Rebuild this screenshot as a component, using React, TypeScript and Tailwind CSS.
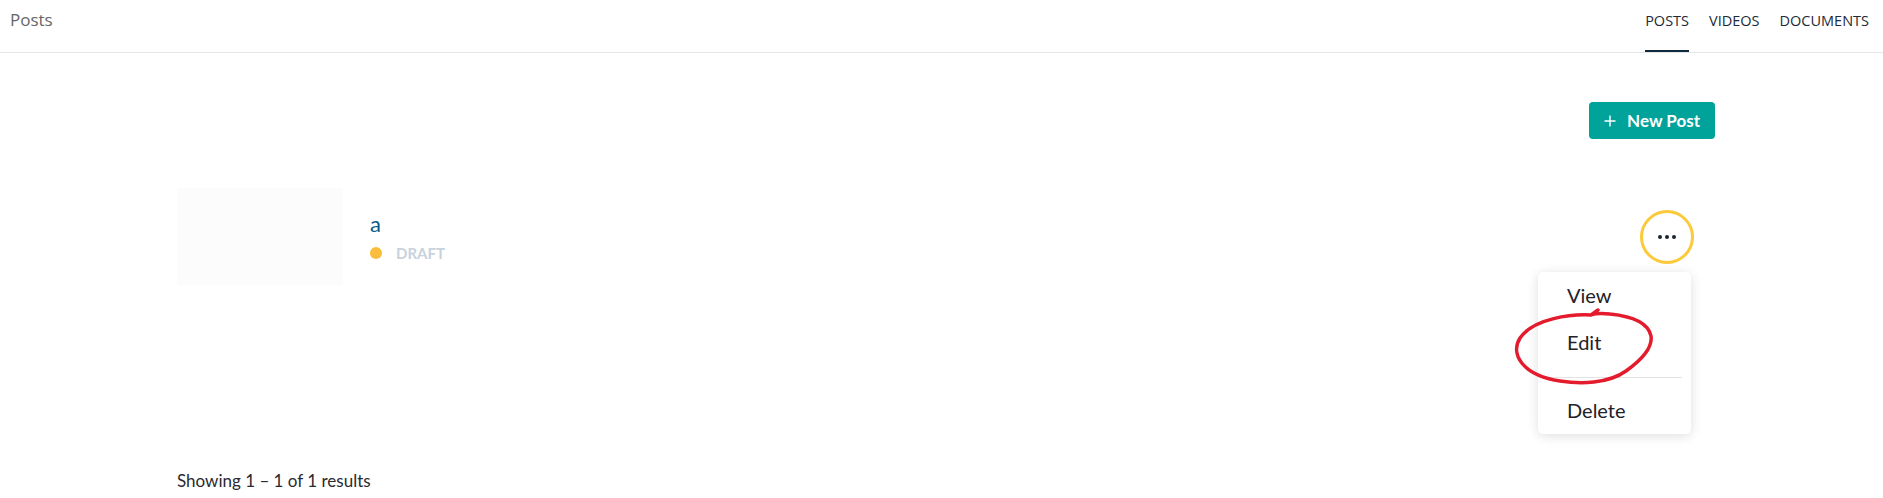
import React from "react";

const tabs = ["POSTS", "VIDEOS", "DOCUMENTS"];

const PostMenu: React.FC = () => (
  <div className="absolute top-[62px] right-[3px] z-10 w-[153px] rounded-[5px] bg-white shadow-[0_2px_12px_rgba(0,0,0,0.13)]">
    <div className="flex h-[47px] items-center pl-[29px] text-[20px] text-[#232128]">View</div>
    <div className="flex h-[47px] items-center pl-[29px] text-[20px] text-[#232128]">Edit</div>
    <div className="mx-[9px] mt-[11px] mb-[9px] h-px bg-[#e3e3e3]" />
    <div className="flex h-[47px] items-center pl-[29px] text-[20px] text-[#232128]">Delete</div>
    {/* hand-drawn annotation around Edit */}
    <svg
      className="pointer-events-none absolute top-[29px] left-[-28px] overflow-visible"
      width="150"
      height="90"
      viewBox="0 0 150 90"
      fill="none"
    >
      <path
        d="M88 9 L81 14 C62 13 24 17 10 37 C0 53 12 74 50 80 C70 83 98 83 116 70 C130 60 143 48 141 35 C138 21 120 15 100 13 C92 12 86 12 81 14"
        stroke="#e31b2c"
        strokeWidth="3.5"
        strokeLinecap="round"
        strokeLinejoin="round"
      />
    </svg>
  </div>
);

export default function App() {
  return (
    <div className="h-[498px] w-full bg-white font-['Lato',sans-serif]">
      <header className="flex h-[53px] items-stretch justify-between border-b border-[#e6e6e6]">
        <div className="pl-[10px] pt-[8px] font-['Open_Sans',sans-serif] text-[17px] leading-[24px] text-[#666]">Posts</div>
        <nav className="flex pr-[4px] font-['Open_Sans',sans-serif] text-[14.5px] leading-[20px] text-[#1e2a36]">
          {tabs.map((t, i) => (
            <div key={t} className="flex h-full flex-col px-[10px]">
              <span className="pt-[11px]">{t}</span>
              <div className={i === 0 ? "mt-auto h-[2px] bg-[#0f2a3c]" : "mt-auto h-[2px]"} />
            </div>
          ))}
        </nav>
      </header>

      <main className="pl-[177px] pr-[168px]">
        <div className="flex justify-end pt-[49px]">
          <button className="flex h-[37px] items-center gap-[11px] rounded-[4px] bg-[#00a39a] px-[15px] text-white">
            <svg width="12" height="12" viewBox="0 0 12 12" fill="none">
              <path d="M6 0.5V11.5M0.5 6H11.5" stroke="white" strokeWidth="1.4" />
            </svg>
            <span className="text-[17px] font-bold">New Post</span>
          </button>
        </div>

        <div className="mt-[49px] flex h-[97px] items-center">
          <div className="h-[97px] w-[166px] bg-[#fcfcfc]" />
          <div className="ml-[27px] flex flex-col">
            <span className="text-[22px] leading-[26px] text-[#0b5d8b]">a</span>
            <div className="mt-[6px] flex items-center">
              <span className="h-[12px] w-[12px] rounded-full bg-[#fbbd3d]" />
              <span className="ml-[14px] text-[15px] leading-[20px] font-bold text-[#c8d2dd]">DRAFT</span>
            </div>
          </div>
          <div className="relative mr-[21px] ml-auto h-[54px] w-[54px]">
            <div className="flex h-full w-full items-center justify-center gap-[3px] rounded-full border-[3px] border-[#fcc93a]">
              <span className="h-[4px] w-[4px] rounded-full bg-[#1b2430]" />
              <span className="h-[4px] w-[4px] rounded-full bg-[#1b2430]" />
              <span className="h-[4px] w-[4px] rounded-full bg-[#1b2430]" />
            </div>
            <PostMenu />
          </div>
        </div>

        <p className="mt-[184px] text-[17px] leading-[24px] text-[#2a2a30]">Showing 1 – 1 of 1 results</p>
      </main>
    </div>
  );
}
